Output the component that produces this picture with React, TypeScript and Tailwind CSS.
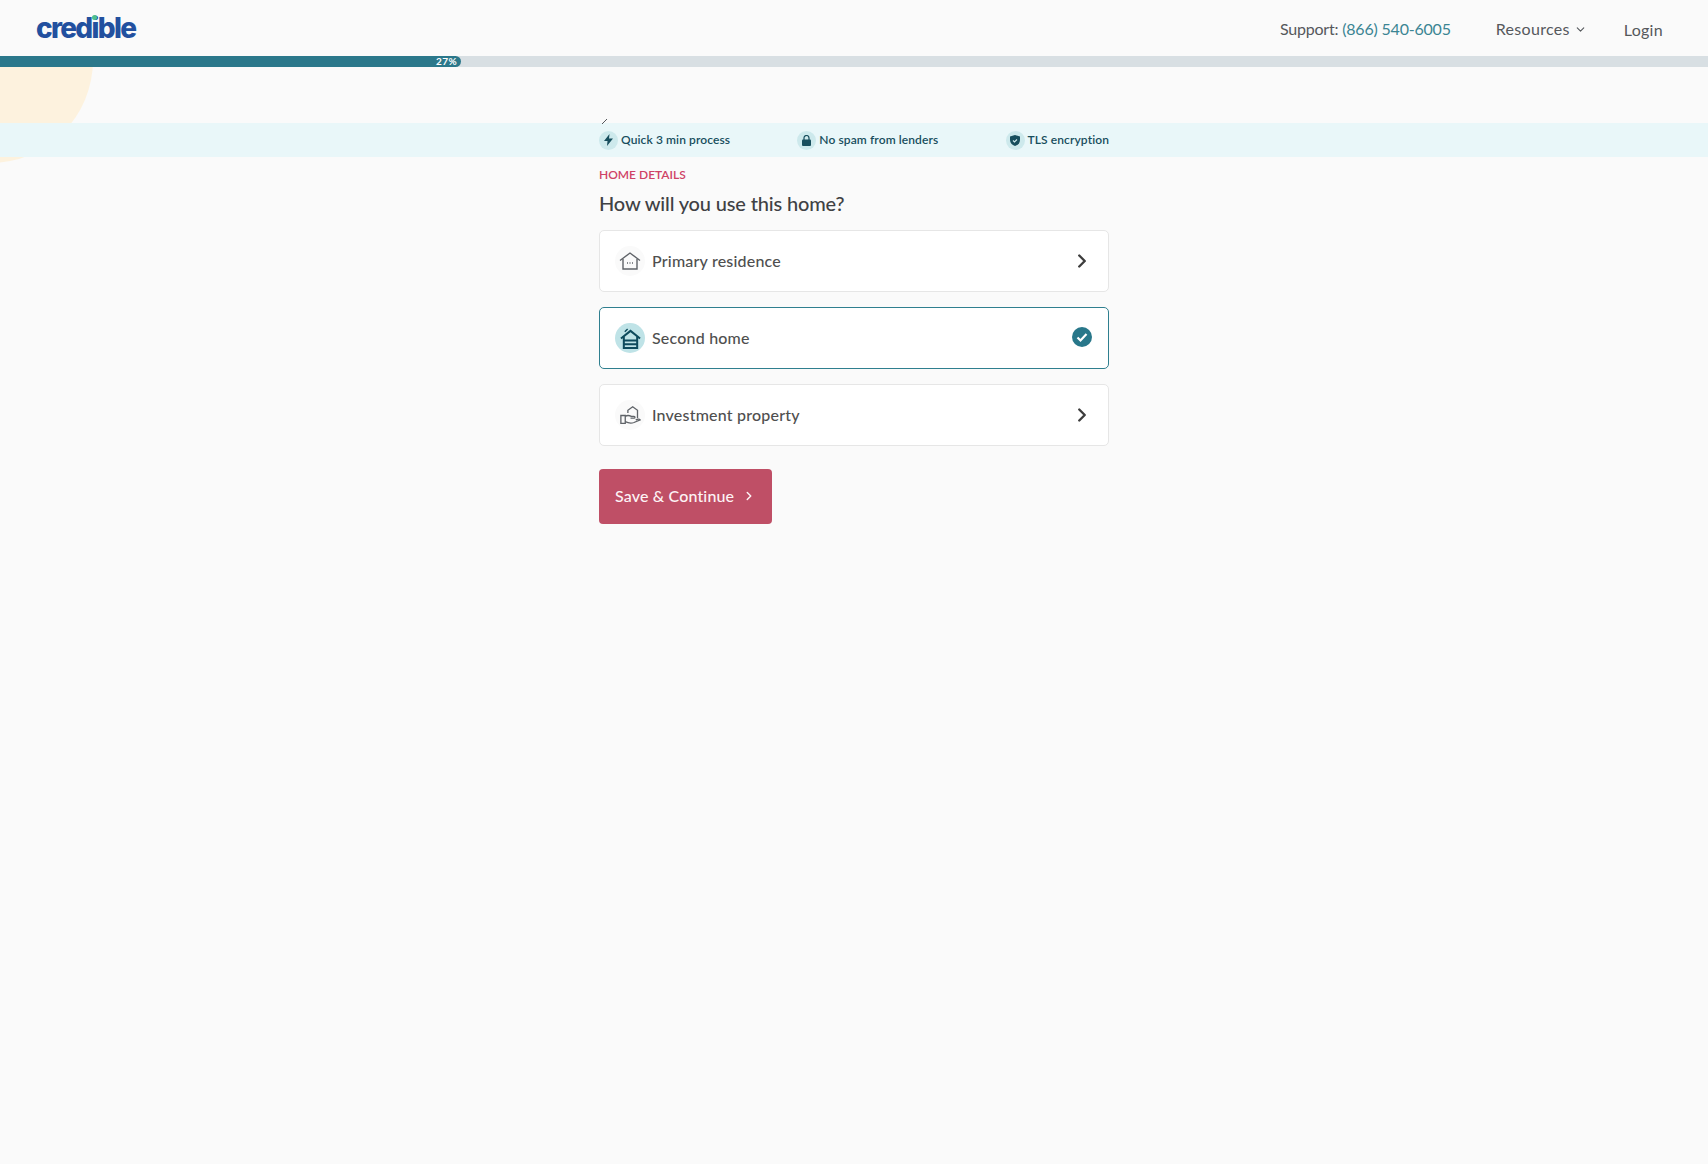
import React from "react";
import { ChevronDown, ChevronRight } from "lucide-react";

const font = { fontFamily: '"Lato", "Liberation Sans", sans-serif' };
const logoFont = { fontFamily: '"Inter", "Liberation Sans", sans-serif' };

function HomeIcon() {
  return (
    <svg width="22" height="20" viewBox="0 0 22 20" fill="none" stroke="#5f6368" strokeWidth="1.4">
      <path d="M1 9.500 11 2l10 7.500" />
      <path d="M4 8v10h14V8" />
      <path d="M8 12h1M10.500 12h1M13 12h1" />
    </svg>
  );
}

function GarageIcon() {
  return (
    <svg width="21" height="21" viewBox="0 0 22 22" fill="none" stroke="#0d4a5c" strokeWidth="2.1">
      <path d="M5 4 8 1" strokeWidth="1.4" />
      <path d="M1 11 11 3l10 8" />
      <path d="M4 9v12h14V9" />
      <path d="M4 13h14M4 17h14" />
    </svg>
  );
}

function HandHouseIcon() {
  return (
    <svg width="21" height="21" viewBox="0 0 24 24" fill="none" stroke="#5f6368" strokeWidth="1.5">
      <path d="M9 9V6l5.500-4L20 6v9" />
      <path d="M1 12h5v9H1z" />
      <path d="M6 13c3-2 5-1 7 0h3c1.500 0 1.500 2 0 2h-4" />
      <path d="M6 19c4 2 7 2 10 1l7-3c-1-1.500-3-1-5 0" />
    </svg>
  );
}

function Perk({ icon, label }: { icon: React.ReactNode; label: string }) {
  return (
    <div className="flex items-center gap-[3px]">
      <span className="flex h-[19px] w-[19px] items-center justify-center rounded-full bg-[#cde9ec]">{icon}</span>
      <span className="text-[12px] font-semibold tracking-[0.1px] text-[#174e5d]">{label}</span>
    </div>
  );
}

function Option({ icon, label, selected }: { icon: React.ReactNode; label: string; selected?: boolean }) {
  return (
    <div
      className={`flex h-[62px] items-center rounded-[5px] border bg-white pl-[15px] pr-[16px] ${
        selected ? "border-[#2f7f8f]" : "border-[#e6e6e6]"
      }`}
    >
      <span
        className={`flex h-[30px] w-[30px] items-center justify-center rounded-full ${
          selected ? "bg-[#bfe3e7]" : "bg-[#fafafa]"
        }`}
      >
        {icon}
      </span>
      <span className="ml-[7px] flex-1 text-[16px] font-medium tracking-[0.2px] text-[#4f4f4f]">{label}</span>
      {selected ? (
        <svg width="20" height="20" viewBox="0 0 20 20" className="mb-[2px]">
          <circle cx="10" cy="10" r="10" fill="#28778a" />
          <path d="m5.500 10.500 3 3 6-6.500" fill="none" stroke="#fff" strokeWidth="2.200" />
        </svg>
      ) : (
        <ChevronRight size={22} strokeWidth={2.6} className="mb-[1px] mr-[-1px] text-[#3d3d3d]" />
      )}
    </div>
  );
}

export default function App() {
  return (
    <div style={font} className="relative min-h-[1164px] overflow-hidden bg-[#fafafa]">
      {/* cream blob sits behind everything */}
      <div className="absolute left-[-113px] top-[-43px] h-[206px] w-[206px] rounded-full bg-[#fdf2de]" />

      <header className="relative flex h-[56px] items-center justify-between bg-[#fafafa] pl-[36px] pr-[45px]">
        <div style={logoFont} className="relative text-[28px] font-extrabold leading-none tracking-[-1.7px] text-[#22509f]">
          credible
          <span className="absolute left-[56px] top-[1px] h-[5px] w-[5px] rounded-full bg-[#4fc08d]" />
        </div>
        <nav className="mt-[2px] flex items-center text-[16px] tracking-[0.3px] text-[#55585c]">
          <span className="tracking-[-0.2px]">
            Support: <span className="text-[#3b8593]">(866) 540-6005</span>
          </span>
          <span className="ml-[45px] flex items-center gap-[4px]">
            Resources
            <ChevronDown size={13} />
          </span>
          <span className="ml-[37px] mt-[2px]">Login</span>
        </nav>
      </header>

      <div className="relative h-[11px] bg-[#d8dfe3]">
        <div className="flex h-full w-[461px] items-center justify-end rounded-r-full bg-[#2b788b] pr-[4px] text-[10px] font-bold tracking-[0.4px] text-white">
          27%
        </div>
      </div>

      <div className="relative mt-[56px] h-[34px] bg-[#e9f7f9]">
        <div className="mx-auto flex h-full w-[510px] items-center justify-between">
          <Perk
            label="Quick 3 min process"
            icon={
              <svg width="9" height="12" viewBox="0 0 9 12" fill="#174e5d">
                <path d="M5.500 0 0 7h3.500L3 12l6-7.500H5z" />
              </svg>
            }
          />
          <Perk
            label="No spam from lenders"
            icon={
              <svg width="9" height="11" viewBox="0 0 9 11">
                <path d="M2 5V3a2.500 2.500 0 0 1 5 0v2" fill="none" stroke="#174e5d" strokeWidth="1.200" />
                <rect y="4.500" width="9" height="6.500" rx="1" fill="#174e5d" />
              </svg>
            }
          />
          <Perk
            label="TLS encryption"
            icon={
              <svg width="10" height="11" viewBox="0 0 10 11">
                <path d="M5 0 10 1.500V5c0 3-2 5-5 6-3-1-5-3-5-6V1.500z" fill="#174e5d" />
                <path d="m3 5.500 1.500 1.500L7 4.500" fill="none" stroke="#cde9ec" strokeWidth="1.100" />
              </svg>
            }
          />
        </div>
      </div>

      <main className="relative mx-auto w-[510px]">
        <div className="mt-[10px] text-[12px] font-semibold leading-[16px] text-[#cf4266]">HOME DETAILS</div>
        <h1 className="mt-[6px] text-[20px] font-medium leading-[28px] tracking-[-0.15px] text-[#3f4144]">
          How will you use this home?
        </h1>
        <div className="mt-[13px] flex flex-col gap-[15px]">
          <Option icon={<HomeIcon />} label="Primary residence" />
          <Option icon={<GarageIcon />} label="Second home" selected />
          <Option icon={<HandHouseIcon />} label="Investment property" />
        </div>
        <button className="mt-[23px] flex h-[55px] w-[173px] items-center rounded-[4px] bg-[#bf4f66] pb-[1px] pl-[16px] text-[16px] font-medium tracking-[0.15px] text-[#fdf3f5]">
          Save &amp; Continue
          <ChevronRight size={14} strokeWidth={2.5} className="ml-[8px]" />
        </button>
      </main>

      {/* clipped remnant above the trust band */}
      <svg width="6" height="5" viewBox="0 0 6 5" className="absolute left-[602px] top-[119px]">
        <path d="M0 5 5 0" stroke="#55585c" strokeWidth="1" />
      </svg>
    </div>
  );
}
